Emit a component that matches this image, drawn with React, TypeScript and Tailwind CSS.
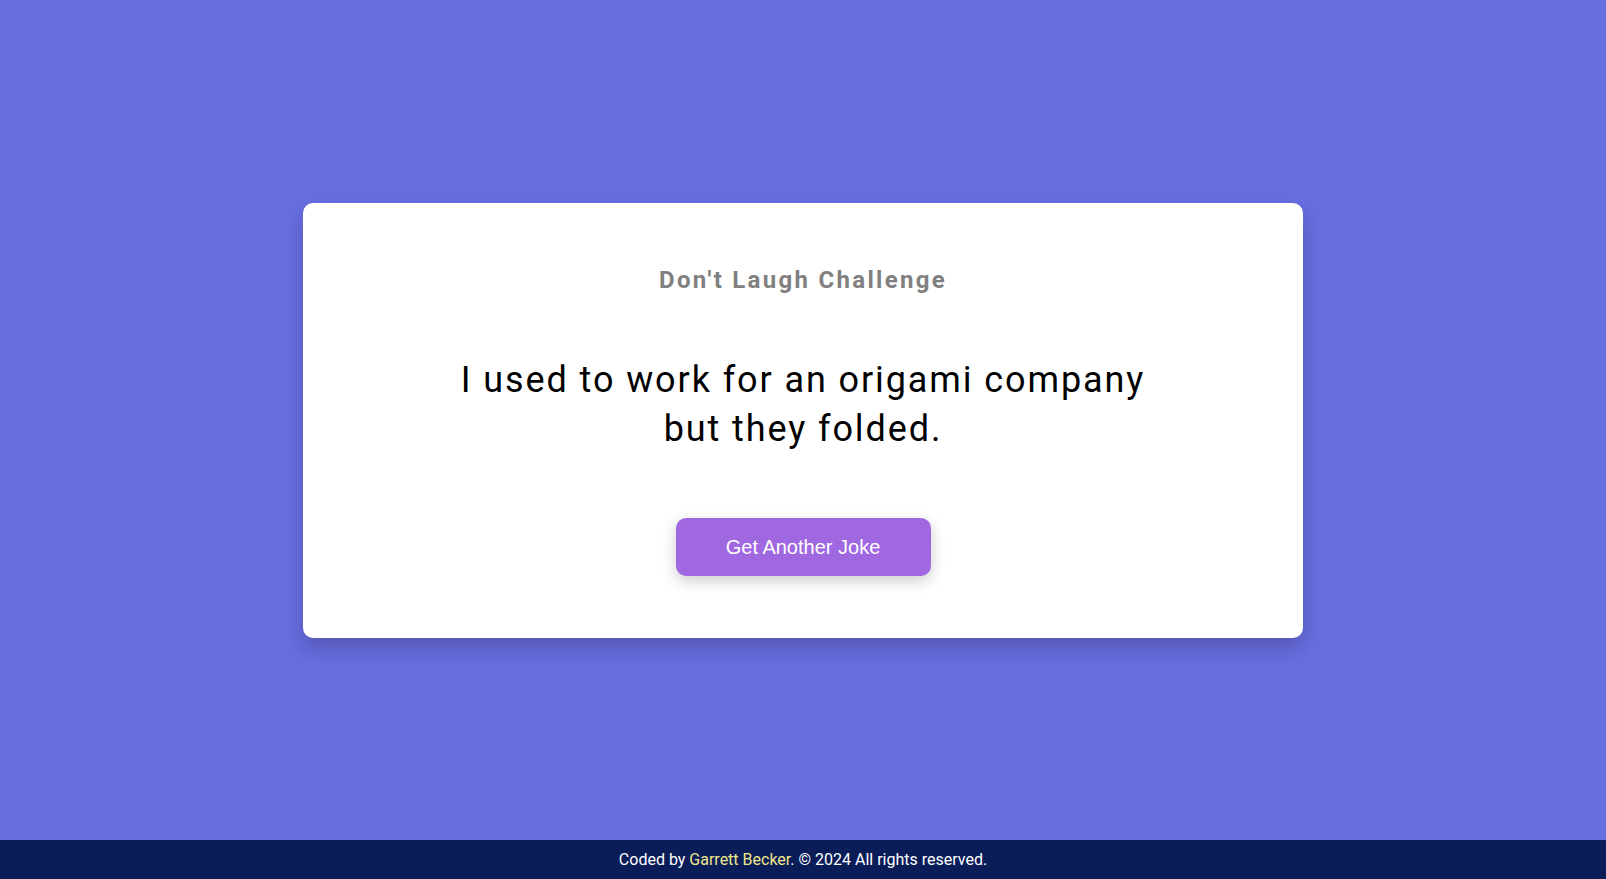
import React from "react";

export default function App() {
  const [joke] = React.useState(
    "I used to work for an origami company but they folded."
  );

  return (
    <div className="flex min-h-screen flex-col bg-[#686de0] font-['Roboto',sans-serif]">
      <main className="flex flex-1 items-center justify-center">
        <div className="flex w-[1000px] flex-col items-center rounded-[10px] bg-white px-[50px] pt-[63px] pb-[62px] shadow-[0_10px_20px_rgba(0,0,0,0.2)]">
          <h3 className="text-[24px] leading-[28px] font-bold tracking-[2.3px] text-[#808080]">
            Don't Laugh Challenge
          </h3>
          <p className="mt-[62px] max-w-[720px] text-center text-[36px] leading-[49px] tracking-[1.9px] text-black">
            {joke}
          </p>
          <button className="mt-[64px] h-[58px] w-[255px] rounded-[10px] bg-[#9f68e0] font-['Liberation_Sans',sans-serif] text-[20px] text-white shadow-[0_5px_15px_rgba(0,0,0,0.2)]">
            Get Another Joke
          </button>
        </div>
      </main>
      <footer className="flex h-[39px] items-center justify-center bg-[#0a1d58] text-[16px] text-white">
        <p>
          Coded by <span className="text-[#f0e68c]">Garrett Becker</span>. © 2024 All rights reserved.
        </p>
      </footer>
    </div>
  );
}
